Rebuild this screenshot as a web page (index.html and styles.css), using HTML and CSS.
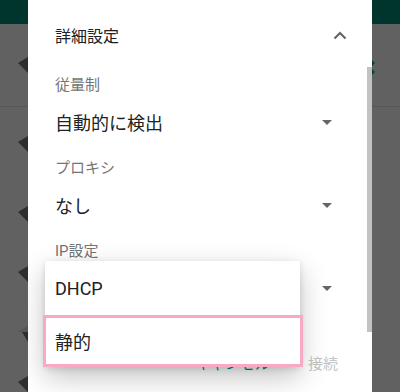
FILE: index.html
```html
<!DOCTYPE html>
<html lang="ja">
<head>
  <meta charset="UTF-8" />
  <meta name="viewport" content="width=device-width, initial-scale=1.0"/>
  <title>詳細設定</title>
  <link rel="stylesheet" href="styles.css">
</head>
<body>

  <!-- Background screen (dimmed) -->
  <div class="screen">
    <div class="appbar"></div>

    <div class="bg-list">
      <div class="bg-row row-a">
        <svg class="bg-icon" width="10" height="16" viewBox="0 0 10 16"><polygon points="10,0 0,6 10,16" /></svg>
      </div>
      <div class="bg-divider"></div>
      <div class="bg-row row-b">
        <svg class="bg-icon" width="10" height="16" viewBox="0 0 10 16"><polygon points="10,0 0,6 10,16" /></svg>
      </div>
      <div class="bg-row row-c">
        <svg class="bg-icon" width="10" height="16" viewBox="0 0 10 16"><polygon points="10,0 0,6 10,16" /></svg>
      </div>
      <div class="bg-row row-d">
        <svg class="bg-icon" width="10" height="16" viewBox="0 0 10 16"><polygon points="10,0 0,6 10,16" /></svg>
      </div>
      <div class="bg-row row-e">
        <svg class="bg-icon" width="10" height="16" viewBox="0 0 10 16"><polygon class="weak" points="10,0 0,6 10,6" /><polygon points="10,6 4,6 10,16" /></svg>
      </div>
      <div class="bg-row row-f">
        <svg class="bg-icon" width="10" height="16" viewBox="0 0 10 16"><polygon points="10,0 0,6 10,16" /></svg>
      </div>
    </div>

    <svg class="bg-toggle" width="5" height="16" viewBox="0 0 5 16"><path d="M0 0 L3 3 L0 6 Z M0 9 L3 12 L0 15 Z" /></svg>
  </div>

  <!-- Dialog -->
  <div class="dialog">
    <div class="dialog-body">
      <div class="section-head">
        <span>詳細設定</span>
        <svg width="14" height="9" viewBox="0 0 14 9"><polyline points="1.5,7.5 7,2 12.5,7.5" fill="none" stroke="#666" stroke-width="2.2" /></svg>
      </div>

      <div class="field">
        <div class="field-label">従量制</div>
        <div class="field-value"><span>自動的に検出</span><i class="caret"></i></div>
      </div>

      <div class="field">
        <div class="field-label">プロキシ</div>
        <div class="field-value"><span>なし</span><i class="caret"></i></div>
      </div>

      <div class="field">
        <div class="field-label">IP設定</div>
        <div class="field-value"><span>DHCP</span><i class="caret"></i></div>
      </div>
    </div>

    <div class="dialog-actions">
      <span class="btn-cancel">キャンセル</span>
      <span class="btn-connect">接続</span>
    </div>

    <div class="scrollbar"></div>

    <!-- Open dropdown -->
    <div class="menu">
      <div class="menu-item">DHCP</div>
      <div class="menu-item selected">静的</div>
    </div>
  </div>

</body>
</html>
```

FILE: styles.css
```css
body {
  margin: 0;
  width: 400px;
  height: 392px;
  overflow: hidden;
  font-family: Roboto, 'Noto Sans CJK JP', sans-serif;
  background-color: #616161;
  color: #212121;
  position: relative;
}

.screen {
  height: 392px;
  overflow: hidden;
}

.appbar {
  height: 24px;
  background-color: #00352d;
}

.bg-row {
  display: flex;
  align-items: center;
  padding-left: 18px;
}

.row-a { height: 82px; }
.row-b { height: 74px; }
.row-c { height: 66px; }
.row-d { height: 54px; }
.row-e { height: 66px; }
.row-f { height: 25px; align-items: flex-end; }

.bg-icon {
  fill: #2e2e2e;
}

.bg-icon .weak {
  fill: #555;
}

.bg-divider {
  height: 1px;
  background-color: #575757;
}

.bg-toggle {
  position: absolute;
  left: 372px;
  top: 60px;
  fill: #00443a;
}

.dialog {
  position: absolute;
  left: 28px;
  top: 0;
  width: 344px;
  height: 392px;
  background-color: #fff;
  overflow: hidden;
}

.dialog-body {
  padding: 0 25px 0 27px;
}

.section-head {
  height: 70px;
  display: flex;
  align-items: center;
  justify-content: space-between;
  font-size: 16px;
}

.field {
  margin-bottom: 9px;
}

.field-label {
  height: 30px;
  line-height: 30px;
  font-size: 15px;
  color: #757575;
}

.field-value {
  height: 44px;
  display: flex;
  align-items: center;
  justify-content: space-between;
  padding-right: 15px;
  font-size: 18px;
}

.caret {
  width: 0;
  height: 0;
  border-left: 5px solid transparent;
  border-right: 5px solid transparent;
  border-top: 5px solid #666;
}

.dialog-actions {
  position: absolute;
  left: 0;
  right: 34px;
  top: 352px;
  display: flex;
  justify-content: flex-end;
  gap: 38px;
  font-size: 15px;
  line-height: 24px;
}

.btn-cancel {
  color: #00897b;
}

.btn-connect {
  color: #c4c4c4;
}

.scrollbar {
  position: absolute;
  right: 0;
  top: 67px;
  width: 5px;
  height: 265px;
  background-color: #c2c2c2;
}

.menu {
  position: absolute;
  left: 17px;
  top: 261px;
  width: 255px;
  background-color: #fff;
  border-radius: 2px;
  box-shadow: 0 10px 28px rgba(0, 0, 0, 0.24), 0 2px 6px rgba(0, 0, 0, 0.12);
}

.menu-item {
  height: 54px;
  padding-left: 10px;
  display: flex;
  align-items: center;
  font-size: 18px;
}

.menu-item.selected {
  height: 52px;
  margin: 0 -3px 0 -2px;
  padding-left: 9px;
  border: 3px solid #f7a9c5;
  box-sizing: border-box;
}
```
